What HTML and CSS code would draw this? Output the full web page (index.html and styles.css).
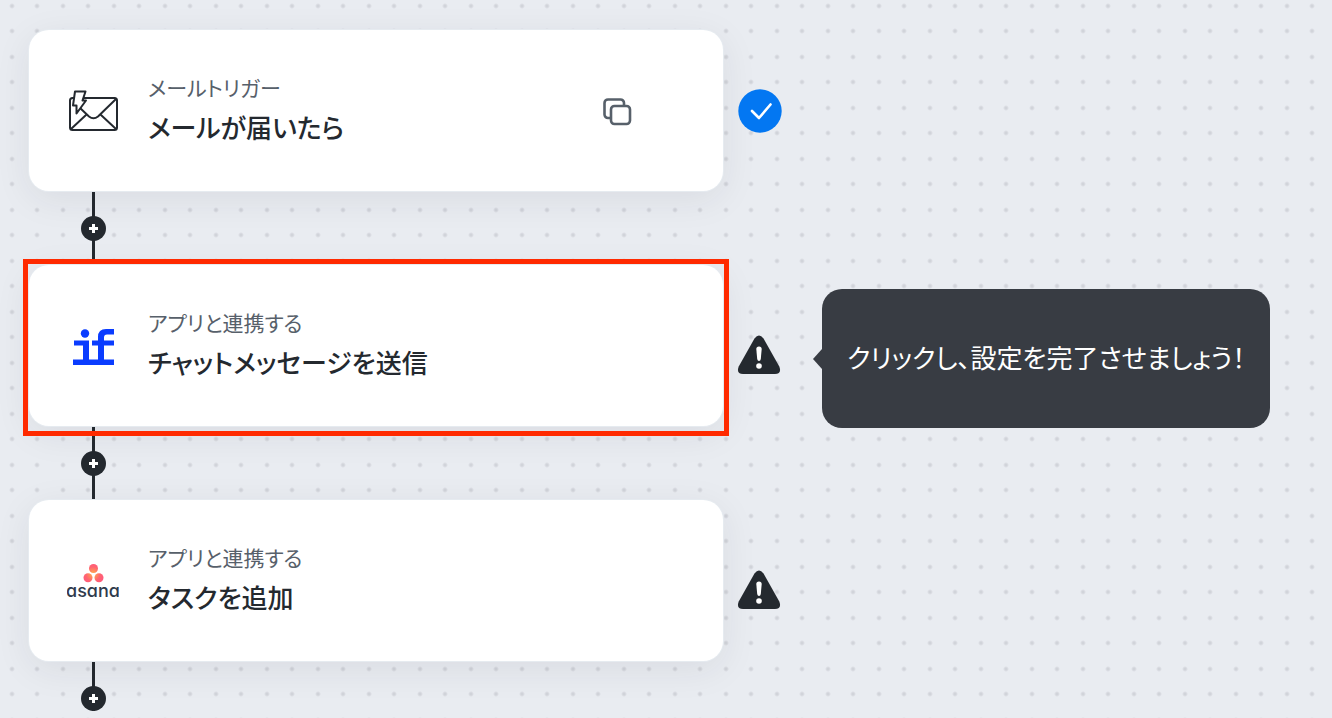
FILE: index.html
```html
<!DOCTYPE html>
<html lang="ja">
<head>
    <meta charset="UTF-8">
    <meta name="viewport" content="width=device-width, initial-scale=1.0">
    <title>フローボット</title>
    <link rel="stylesheet" href="styles.css">
</head>
<body>

<main class="flow">
    <!-- トリガー -->
    <section class="step">
        <div class="card">
            <svg class="app-icon" viewBox="0 0 52 52" fill="none" stroke="#24292f" stroke-width="2" stroke-linejoin="round" stroke-linecap="round">
                <rect x="3" y="13" width="47" height="32" rx="2.5"/>
                <path d="M4 44 19 30M49 44 34 30M49 14 31 31.500Q26.500 35 22 31.500L12 22"/>
                <path d="M8 6.500H18.500L15.500 15.500H19L9.500 28.500V20.500H6Z" fill="#fff"/>
            </svg>
            <div class="card-text">
                <p class="card-type">メールトリガー</p>
                <h2 class="card-title">メールが届いたら</h2>
            </div>
            <button class="btn-copy" type="button" aria-label="コピー">
                <svg viewBox="0 0 30 30" fill="none" stroke="#57606a" stroke-width="2.6" stroke-linejoin="round">
                    <path d="M8.500 22H6a3.500 3.500 0 0 1-3.500-3.500V7A3.500 3.500 0 0 1 6 3.500H18.500A3.500 3.500 0 0 1 22 7V9.500"/>
                    <rect x="9" y="10" width="19" height="18" rx="3.500"/>
                </svg>
            </button>
        </div>
        <div class="status">
            <svg class="icon-done" viewBox="0 0 44 44">
                <circle cx="22" cy="22" r="21.700" fill="#0377f2"/>
                <path d="M14 22 21 29 32.500 15.500" fill="none" stroke="#fff" stroke-width="2.600" stroke-linecap="round" stroke-linejoin="round"/>
            </svg>
        </div>
    </section>

    <div class="connector">
        <button class="btn-add" type="button" aria-label="追加"></button>
    </div>

    <!-- チャット -->
    <section class="step">
        <div class="card selected">
            <svg class="app-icon" viewBox="0 0 52 52" fill="#0a3cff">
                <circle cx="18" cy="13.500" r="4.200"/>
                <path d="M7 20.500H22V39.500H31V25.500H25V20.500H31V17Q31 9 39 9H47V14.500H40Q37 14.500 37 17.500V20.500H47V25.500H37V39.500H47V45H6V39.500H16V25.500H7Z"/>
            </svg>
            <div class="card-text">
                <p class="card-type">アプリと連携する</p>
                <h2 class="card-title">チャットメッセージを送信</h2>
            </div>
        </div>
        <div class="status warning">
            <svg class="icon-warning" viewBox="0 0 44 40">
                <path d="M17.500 3.500Q22 -2.500 26.500 3.500L42.300 31.500Q45 39 38 39H6Q-1 39 1.700 31.500Z" fill="#24292f"/>
                <path d="M19.300 14Q19.300 11.500 22 11.500T24.700 14L23.800 24Q23.500 26 22 26T20.200 24Z" fill="#fff"/>
                <circle cx="22" cy="31" r="2.800" fill="#fff"/>
            </svg>
            <div class="tooltip" role="tooltip">クリックし、設定を完了させましょう！</div>
        </div>
    </section>

    <div class="connector">
        <button class="btn-add" type="button" aria-label="追加"></button>
    </div>

    <!-- Asana -->
    <section class="step">
        <div class="card">
            <svg class="app-icon" viewBox="0 0 52 52">
                <defs>
                    <radialGradient id="coral" gradientUnits="userSpaceOnUse" cx="26" cy="19" r="13">
                        <stop offset="0" stop-color="#ffb14a"/>
                        <stop offset="0.550" stop-color="#ff6470"/>
                        <stop offset="1" stop-color="#ff5582"/>
                    </radialGradient>
                </defs>
                <g fill="url(#coral)">
                    <circle cx="26.500" cy="13.500" r="4.500"/>
                    <circle cx="21" cy="22.700" r="4.500"/>
                    <circle cx="32" cy="22.700" r="4.500"/>
                </g>
                <text class="asana-name" x="26" y="42" text-anchor="middle">asana</text>
            </svg>
            <div class="card-text">
                <p class="card-type">アプリと連携する</p>
                <h2 class="card-title">タスクを追加</h2>
            </div>
        </div>
        <div class="status warning">
            <svg class="icon-warning" viewBox="0 0 44 40">
                <path d="M17.500 3.500Q22 -2.500 26.500 3.500L42.300 31.500Q45 39 38 39H6Q-1 39 1.700 31.500Z" fill="#24292f"/>
                <path d="M19.300 14Q19.300 11.500 22 11.500T24.700 14L23.800 24Q23.500 26 22 26T20.200 24Z" fill="#fff"/>
                <circle cx="22" cy="31" r="2.800" fill="#fff"/>
            </svg>
        </div>
    </section>

    <div class="connector connector-last">
        <button class="btn-add" type="button" aria-label="追加"></button>
    </div>
</main>

</body>
</html>
```

FILE: styles.css
```css
* {
    box-sizing: border-box;
}

body {
    margin: 0;
    font-family: "Noto Sans CJK JP", sans-serif;
    font-feature-settings: "palt";
    color: #24292f;
    background-color: #e9ecf1;
    /* グリッドの点 */
    background-image:
        radial-gradient(circle at 12px 6px, #d1d4da 1px, transparent 3px),
        radial-gradient(circle at 37px 6px, #d1d4da 1px, transparent 3px),
        radial-gradient(circle at 12px 31px, #d1d4da 1px, transparent 3px),
        radial-gradient(circle at 37px 31px, #d1d4da 1px, transparent 3px);
    background-size: 51px 51px;
}

.flow {
    padding: 30px 29px 0;
}

.step {
    display: flex;
    align-items: center;
    gap: 15px;
}

.card {
    position: relative;
    display: flex;
    align-items: center;
    gap: 29px;
    flex: 0 1 694px;
    min-height: 161px;
    padding: 0 91px 0 38px;
    background: #fff;
    border-radius: 20px;
    box-shadow: 0 0 0 1px #e6ebf0, 0 8px 36px rgba(36, 41, 47, 0.08);
}

/* 選択中のカードの赤枠 */
.card.selected::after {
    content: "";
    position: absolute;
    inset: -6px -6px -10px;
    border: 5px solid #ff2a00;
    z-index: 2;
}

.app-icon {
    flex: none;
    width: 52px;
    height: 52px;
}

.asana-name {
    font-family: Inter, sans-serif;
    font-feature-settings: "cv11";
    font-size: 18px;
    font-weight: 500;
    fill: #2f3a4c;
}

.card-text {
    flex: 1;
    display: flex;
    flex-direction: column;
    gap: 4px;
    padding-bottom: 4px;
}

.card-type,
.card-title {
    margin: 0;
}

.card-type {
    font-size: 21px;
    line-height: 32px;
    color: #57606a;
}

.card-title {
    font-size: 26px;
    font-weight: 500;
    line-height: 40px;
}

button {
    padding: 0;
    border: none;
    cursor: pointer;
}

.btn-copy {
    width: 30px;
    height: 30px;
    background: none;
}

.btn-copy svg {
    display: block;
}

.status {
    position: relative;
    flex: none;
    width: 44px;
}

.status svg {
    display: block;
    width: 44px;
}

.status.warning {
    padding-top: 18px;
    margin-left: -1px;
}

.connector {
    display: flex;
    flex-direction: column;
    align-items: center;
    justify-content: center;
    width: 25px;
    height: 74px;
    margin-left: 52px;
    background: linear-gradient(#24292f, #24292f) center / 3px 100% no-repeat;
}

.connector-last {
    justify-content: flex-end;
    height: 50px;
}

.btn-add {
    width: 25px;
    height: 25px;
    border-radius: 50%;
    background:
        linear-gradient(#fff, #fff) center / 9px 3px no-repeat,
        linear-gradient(#fff, #fff) center / 3px 9px no-repeat,
        #24292f;
}

.tooltip {
    position: absolute;
    top: -28px;
    left: 85px;
    padding: 48px 25px 51px;
    border-radius: 20px;
    background: #383c43;
    color: #fff;
    font-size: 26px;
    line-height: 40px;
    white-space: nowrap;
}

.tooltip::before {
    content: "";
    position: absolute;
    top: 60px;
    left: -9px;
    border: 10px solid transparent;
    border-left: none;
    border-right: 9px solid #383c43;
}
```
